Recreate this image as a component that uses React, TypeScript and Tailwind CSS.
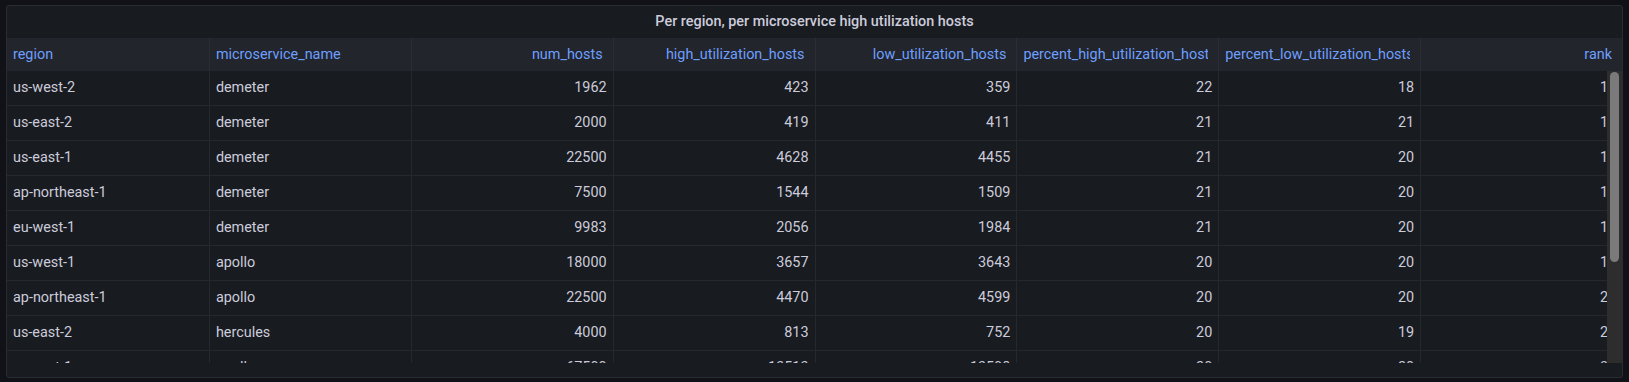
import React from "react";

const headers = [
  { label: "region", right: false },
  { label: "microservice_name", right: false },
  { label: "num_hosts", right: true },
  { label: "high_utilization_hosts", right: true },
  { label: "low_utilization_hosts", right: true },
  { label: "percent_high_utilization_hosts", right: true },
  { label: "percent_low_utilization_hosts", right: true },
  { label: "rank", right: true },
];

const rows: (string | number)[][] = [
  ["us-west-2", "demeter", 1962, 423, 359, 22, 18, 1],
  ["us-east-2", "demeter", 2000, 419, 411, 21, 21, 1],
  ["us-east-1", "demeter", 22500, 4628, 4455, 21, 20, 1],
  ["ap-northeast-1", "demeter", 7500, 1544, 1509, 21, 20, 1],
  ["eu-west-1", "demeter", 9983, 2056, 1984, 21, 20, 1],
  ["us-west-1", "apollo", 18000, 3657, 3643, 20, 20, 1],
  ["ap-northeast-1", "apollo", 22500, 4470, 4599, 20, 20, 2],
  ["us-east-2", "hercules", 4000, 813, 752, 20, 19, 2],
  ["us-east-1", "apollo", 67500, 13513, 13598, 20, 20, 3],
];

export default function App() {
  return (
    <div
      className="w-[1629px] h-[382px] bg-[#111217] pt-[5px] pl-[6px] pr-[6px] pb-[4px]"
      style={{ fontFamily: "Roboto, 'Liberation Sans', sans-serif" }}
    >
      <div className="h-full flex flex-col border border-[#2a2c32] rounded-[3px] bg-[#181b1f] overflow-hidden">
        <div className="h-[32px] shrink-0 flex items-center justify-center text-[14.4px] font-medium text-[#ccccdc]">
          Per region, per microservice high utilization hosts
        </div>
        <div className="grid grid-cols-8 h-[33px] shrink-0 bg-[#22252b]">
          {headers.map((h, i) => (
            <div
              key={h.label}
              className={`min-w-0 flex items-center pl-[6px] pr-[10px] ${
                i > 0 ? "border-l border-[#2a2d33]" : ""
              }`}
            >
              <div
                className={`w-full overflow-hidden whitespace-nowrap text-[14.4px] text-[#6e9fff] ${
                  h.right ? "text-right" : "text-left"
                }`}
              >
                {h.label}
              </div>
            </div>
          ))}
        </div>
        <div className="relative h-[292px] shrink-0 overflow-hidden">
          {rows.map((r, ri) => (
            <div key={ri} className="grid grid-cols-8 h-[35px] border-b border-[#25282d]">
              {r.map((c, ci) => (
                <div
                  key={ci}
                  className={`min-w-0 flex items-center pl-[6px] overflow-hidden whitespace-nowrap text-[14.4px] text-[#ccccdc] ${
                    ci > 0 ? "border-l border-[#25282d]" : ""
                  } ${headers[ci].right ? "justify-end" : "justify-start"} ${
                    ci === 7 ? "pr-[14px]" : "pr-[6px]"
                  }`}
                >
                  {c}
                </div>
              ))}
            </div>
          ))}
          <div className="absolute top-0 right-0 bottom-0 w-[15px] bg-[#2d2d2e]">
            <div className="absolute top-[1px] left-[3px] w-[9px] h-[190px] rounded-full bg-[#7a7a7b]" />
          </div>
        </div>
      </div>
    </div>
  );
}
